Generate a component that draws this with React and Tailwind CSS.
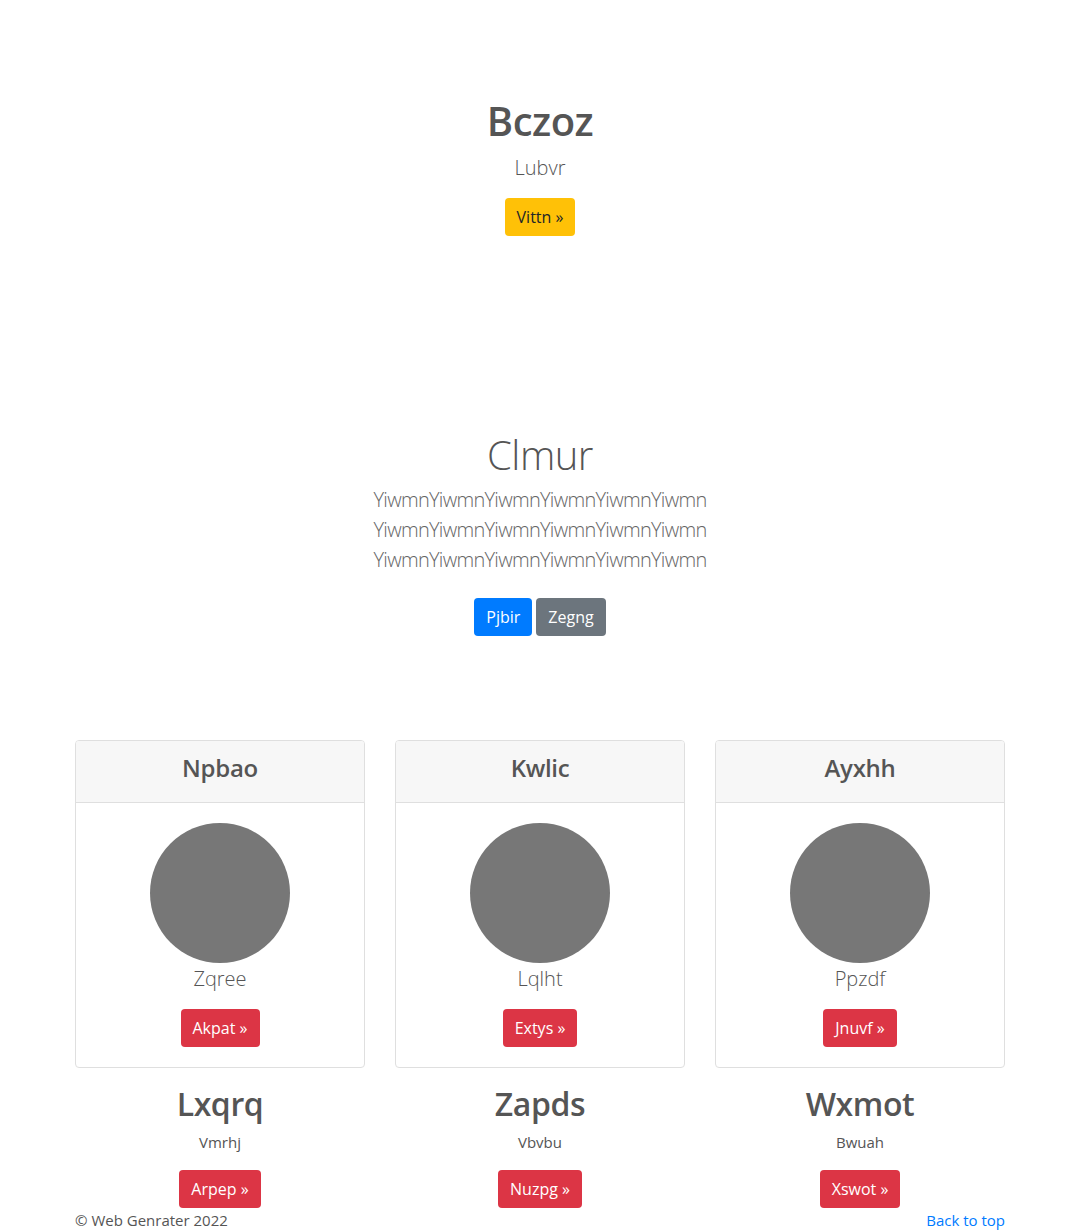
export default function App() {
  const font = { fontFamily: '"Open Sans", "Noto Sans", Arial, sans-serif' };
  const cards = [
    { title: "Npbao", sub: "Zqree", btn: "Akpat", h: "Lxqrq", p: "Vmrhj", b2: "Arpep" },
    { title: "Kwlic", sub: "Lqlht", btn: "Extys", h: "Zapds", p: "Vbvbu", b2: "Nuzpg" },
    { title: "Ayxhh", sub: "Ppzdf", btn: "Jnuvf", h: "Wxmot", p: "Bwuah", b2: "Xswot" },
  ];
  return (
    <div className="bg-white text-[#555] text-[16px] leading-6 font-['Open_Sans','Noto_Sans',Arial,sans-serif]" style={font}>
      <section className="pt-[97px] text-center">
        <h1 className="text-[40px] leading-[48px] font-semibold tracking-[-0.5px] mb-2">Bczoz</h1>
        <p className="text-[20px] leading-[30px] font-light mb-[15px]">Lubvr</p>
        <a className="inline-block bg-[#ffc107] text-[#212529] px-3 py-[7px] rounded-[4px] text-[16px] leading-6">Vittn »</a>
      </section>

      <section className="pt-[195px] text-center">
        <h1 className="text-[40px] leading-[48px] font-light tracking-[-0.5px] mb-[6px]">Clmur</h1>
        <div className="text-[20px] leading-[30px] font-light text-[#666] tracking-[-0.7px]">
          <div>YiwmnYiwmnYiwmnYiwmnYiwmnYiwmn</div>
          <div>YiwmnYiwmnYiwmnYiwmnYiwmnYiwmn</div>
          <div>YiwmnYiwmnYiwmnYiwmnYiwmnYiwmn</div>
        </div>
        <div className="mt-[23px] flex justify-center gap-1">
          <a className="inline-block bg-[#007bff] text-white px-3 py-[7px] rounded-[4px] text-[16px] leading-6">Pjbir</a>
          <a className="inline-block bg-[#6c757d] text-white px-3 py-[7px] rounded-[4px] text-[16px] leading-6">Zegng</a>
        </div>
      </section>

      <section className="mt-[104px] w-[930px] mx-auto">
        <div className="grid grid-cols-3 gap-[30px]">
          {cards.map((c) => (
            <div key={c.title} className="text-center">
              <div className="border border-[#dfdfdf] rounded-[4px] overflow-hidden">
                <div className="bg-[#f7f7f7] border-b border-[#dfdfdf] px-5 pt-3 pb-5">
                  <h4 className="text-[24px] leading-[29px] font-semibold tracking-[-0.3px]">{c.title}</h4>
                </div>
                <div className="p-5 pt-5 flex flex-col items-center">
                  <div className="w-[140px] h-[140px] rounded-full bg-[#777]" />
                  <p className="mt-[1px] text-[20px] leading-[30px] font-light mb-[15px]">{c.sub}</p>
                  <a className="inline-block bg-[#dc3545] text-white px-3 py-[7px] rounded-[4px] text-[16px] leading-6">{c.btn} »</a>
                </div>
              </div>
              <h2 className="mt-[17px] text-[32px] leading-[38px] font-semibold tracking-[-0.4px]">{c.h}</h2>
              <p className="mt-[7px] text-[15px] leading-6 mb-4">{c.p}</p>
              <a className="inline-block bg-[#dc3545] text-white px-3 py-[7px] rounded-[4px] text-[16px] leading-6">{c.b2} »</a>
            </div>
          ))}
        </div>
        <footer className="flex justify-between text-[15px] leading-6">
          <p>© Web Genrater 2022</p>
          <a className="text-[#007bff]">Back to top</a>
        </footer>
      </section>
    </div>
  );
}
